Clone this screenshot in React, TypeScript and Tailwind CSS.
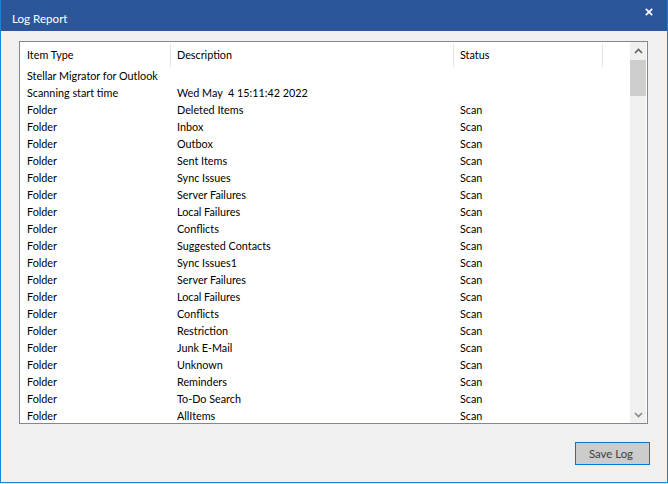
import React from "react";

const rows: [string, string, string][] = [
  ["Stellar Migrator for Outlook", "", ""],
  ["Scanning start time", "Wed May  4 15:11:42 2022", ""],
  ["Folder", "Deleted Items", "Scan"],
  ["Folder", "Inbox", "Scan"],
  ["Folder", "Outbox", "Scan"],
  ["Folder", "Sent Items", "Scan"],
  ["Folder", "Sync Issues", "Scan"],
  ["Folder", "Server Failures", "Scan"],
  ["Folder", "Local Failures", "Scan"],
  ["Folder", "Conflicts", "Scan"],
  ["Folder", "Suggested Contacts", "Scan"],
  ["Folder", "Sync Issues1", "Scan"],
  ["Folder", "Server Failures", "Scan"],
  ["Folder", "Local Failures", "Scan"],
  ["Folder", "Conflicts", "Scan"],
  ["Folder", "Restriction", "Scan"],
  ["Folder", "Junk E-Mail", "Scan"],
  ["Folder", "Unknown", "Scan"],
  ["Folder", "Reminders", "Scan"],
  ["Folder", "To-Do Search", "Scan"],
  ["Folder", "AllItems", "Scan"],
];

export default function App() {
  return (
    <div
      className="w-[668px] h-[484px] bg-[#f0f0f0] overflow-hidden"
      style={{ fontFamily: 'Lato, "Noto Sans", sans-serif' }}
    >
      <div className="w-[668px] h-[483px] flex flex-col border-x border-b border-[#1883d7]">
        {/* Title bar */}
        <div className="h-[31px] shrink-0 bg-[#2b579a] flex items-center justify-between pl-[11px] pr-[14px]">
          <span className="text-white text-[11.6px] leading-none mt-[7px]">Log Report</span>
          <svg width="8" height="8" viewBox="0 0 8 8" className="mb-[8px]">
            <path d="M0.8 0.8 L7.2 7.2 M7.2 0.8 L0.8 7.2" stroke="#ffffff" strokeWidth="1.7" />
          </svg>
        </div>

        {/* Body */}
        <div className="flex-1 flex flex-col pl-[18px] pr-[18px] pt-[10px]">
          <div className="w-[629px] h-[383px] border border-[#828790] bg-white flex overflow-hidden">
            <div className="flex-1 flex flex-col overflow-hidden text-[10.8px] text-black">
              {/* Header */}
              <div className="h-[25px] shrink-0 flex items-center">
                <div className="w-[151px] h-[23px] mt-[1px] flex items-center pl-[7px] pt-[1px] border-r border-[#e5e5e5]">Item Type</div>
                <div className="w-[283px] h-[23px] mt-[1px] flex items-center pl-[6px] pt-[1px] border-r border-[#e5e5e5]">Description</div>
                <div className="w-[149px] h-[23px] mt-[1px] flex items-center pl-[6px] pt-[1px] border-r border-[#e5e5e5]">Status</div>
              </div>
              {rows.map((r, i) => (
                <div key={i} className="h-[17px] shrink-0 flex items-center whitespace-pre pt-[2px]">
                  <div className="w-[151px] pl-[7px]">{r[0]}</div>
                  <div className="w-[283px] pl-[6px]">{r[1]}</div>
                  <div className="w-[149px] pl-[6px]">{r[2]}</div>
                </div>
              ))}
            </div>
            {/* Scrollbar */}
            <div className="w-[16px] mr-[1px] shrink-0 bg-[#f0f0f0] flex flex-col">
              <div className="h-[18px] flex items-center justify-center">
                <svg width="9" height="6" viewBox="0 0 9 6">
                  <path d="M1 5 L4.5 1.5 L8 5" stroke="#606060" strokeWidth="1.6" fill="none" />
                </svg>
              </div>
              <div className="h-[36px] bg-[#cdcdcd]" />
              <div className="flex-1" />
              <div className="h-[17px] flex items-center justify-center">
                <svg width="9" height="6" viewBox="0 0 9 6">
                  <path d="M1 1 L4.5 4.5 L8 1" stroke="#8a8a8a" strokeWidth="1.6" fill="none" />
                </svg>
              </div>
            </div>
          </div>
          <div className="flex justify-end mt-[18px]">
            <button className="w-[75px] h-[23px] border border-[#0078d7] bg-[#cccccc] text-[11.4px] text-[#404040] flex items-center justify-center pt-[1px] mr-[-1px] pr-[3px]">
              Save Log
            </button>
          </div>
        </div>
      </div>
      <div className="h-[1px] bg-[#dfe6ee]" />
    </div>
  );
}
